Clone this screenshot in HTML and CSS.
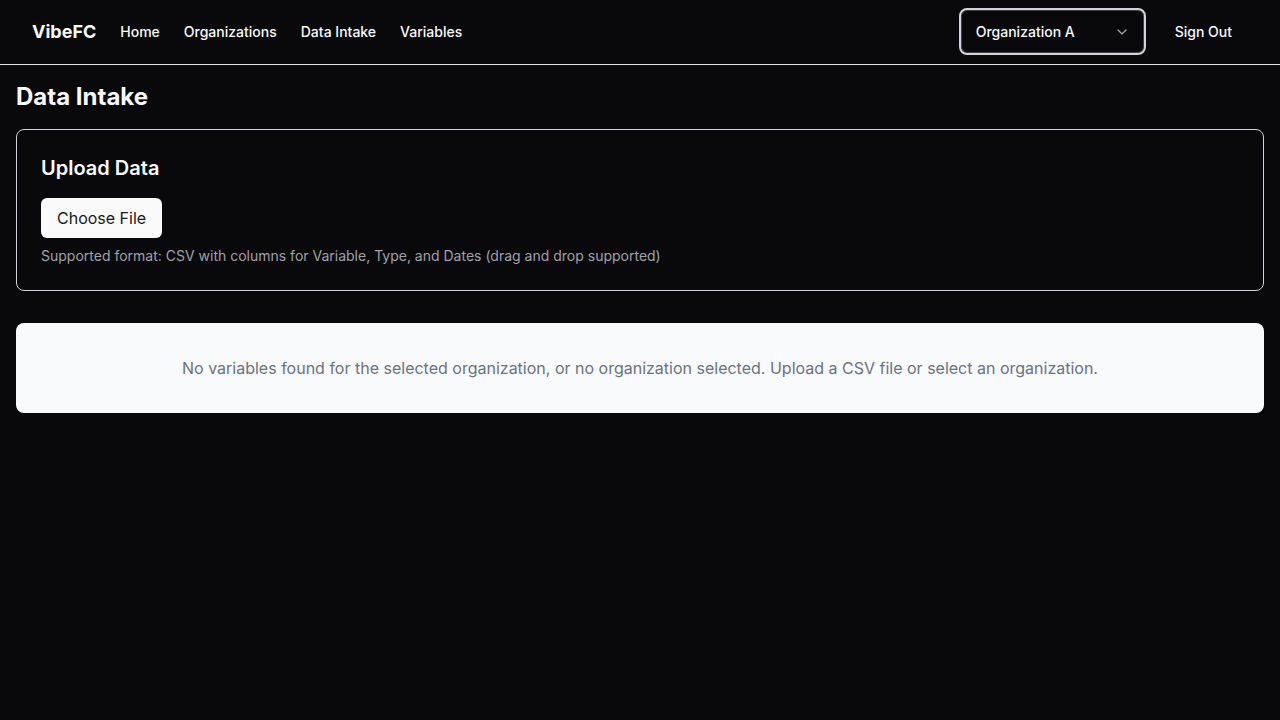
FILE: index.html
```html
<!DOCTYPE html>
<html lang="en">
<head>
<meta charset="utf-8">
<title>VibeFC - Data Intake</title>
<link rel="stylesheet" href="styles.css">
</head>
<body>
<header class="topbar">
  <nav class="nav-left">
    <span class="brand">VibeFC</span>
    <a class="nav-link" href="#">Home</a>
    <a class="nav-link" href="#">Organizations</a>
    <a class="nav-link" href="#">Data Intake</a>
    <a class="nav-link" href="#">Variables</a>
  </nav>
  <div class="nav-right">
    <button class="org-select">
      <span>Organization A</span>
      <svg class="chev" width="16" height="16" viewBox="0 0 24 24" fill="none" stroke="currentColor" stroke-width="2" stroke-linecap="round" stroke-linejoin="round"><path d="m6 9 6 6 6-6"/></svg>
    </button>
    <button class="signout">Sign Out</button>
  </div>
</header>
<main class="page">
  <h1 class="page-title">Data Intake</h1>
  <section class="card">
    <h2 class="card-title">Upload Data</h2>
    <button class="file-btn">Choose File</button>
    <p class="hint">Supported format: CSV with columns for Variable, Type, and Dates (drag and drop supported)</p>
  </section>
  <section class="empty">
    No variables found for the selected organization, or no organization selected. Upload a CSV file or select an organization.
  </section>
</main>
</body>
</html>
```
FILE: styles.css
```css
* { box-sizing: border-box; }
html, body { margin: 0; padding: 0; }
body {
  background: #09090b;
  color: #fafafa;
  font-family: Inter, "Noto Sans", sans-serif;
  min-height: 720px;
}
.topbar {
  height: 65px;
  border-bottom: 1px solid #e4e4e7;
  display: flex;
  align-items: center;
  justify-content: space-between;
  padding: 0 32px 1px;
}
.nav-left {
  display: flex;
  align-items: center;
  gap: 24px;
}
.brand {
  font-size: 18px;
  font-weight: 700;
}
.nav-link {
  color: #fafafa;
  text-decoration: none;
  font-size: 14px;
  font-weight: 500;
}
.nav-right {
  display: flex;
  align-items: center;
  gap: 13px;
}
.org-select {
  width: 187px;
  height: 47px;
  border: 2px solid #d4d4d8;
  border-radius: 8px;
  box-shadow: inset 0 0 0 1px #3f3f46;
  background: #09090b;
  color: #fafafa;
  font-family: inherit;
  font-size: 14px;
  font-weight: 500;
  display: flex;
  align-items: center;
  justify-content: space-between;
  padding: 0 14px 0 15px;
}
.chev { color: #a1a1aa; }
.signout {
  background: transparent;
  border: none;
  color: #fafafa;
  font-family: inherit;
  font-size: 14px;
  font-weight: 500;
  height: 40px;
  padding: 0 16px;
}
.page {
  padding: 16px;
}
.page-title {
  margin: 0 0 16px;
  font-size: 24px;
  line-height: 32px;
  font-weight: 700;
}
.card {
  border: 1px solid #d4d4d8;
  border-radius: 8px;
  padding: 24px;
  display: flex;
  flex-direction: column;
  align-items: flex-start;
}
.card-title {
  margin: 0 0 16px;
  font-size: 20px;
  line-height: 28px;
  font-weight: 600;
}
.file-btn {
  background: #fafafa;
  color: #18181b;
  border: none;
  border-radius: 6px;
  height: 40px;
  padding: 0 16px;
  font-family: inherit;
  font-size: 16px;
  font-weight: 400;
}
.hint {
  margin: 8px 0 0;
  font-size: 14px;
  line-height: 20px;
  color: #a1a1aa;
}
.empty {
  margin-top: 32px;
  background: #f8fafc;
  border-radius: 8px;
  padding: 33px 16px;
  text-align: center;
  color: #6b7280;
  font-size: 16px;
  line-height: 24px;
}
```
